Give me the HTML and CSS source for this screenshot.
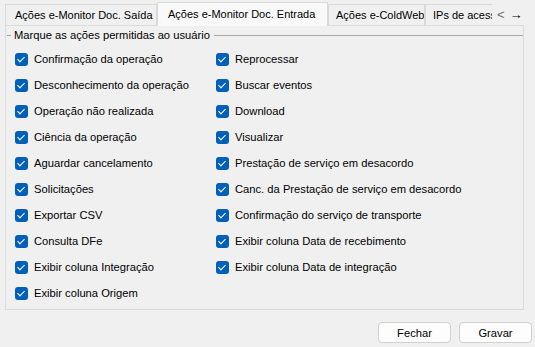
FILE: index.html
```html
<!DOCTYPE html>
<html lang="pt-BR">
  <head>
    <meta charset="UTF-8" />
    <title>Ações permitidas</title>
    <link rel="stylesheet" href="styles.css">
  </head>
  <body>
    <div class="tabs">
      <div class="tab tab-saida">Ações e-Monitor Doc. Saída</div>
      <div class="tab tab-entrada active">Ações e-Monitor Doc. Entrada</div>
      <div class="tab tab-coldweb">Ações e-ColdWeb</div>
      <div class="tab tab-ips">IPs de acesso</div>
      <div class="tab-scroll">
        <span class="arrow-left">&lt;</span>
        <span class="arrow-right">&rarr;</span>
      </div>
    </div>
    <div class="panel">
      <div class="group-title">
        <span class="dash"></span>
        <span class="title-text">Marque as ações permitidas ao usuário</span>
        <span class="line"></span>
      </div>
      <div class="options">
        <div class="column">
          <label class="check"><span class="box"></span>Confirmação da operação</label>
          <label class="check"><span class="box"></span>Desconhecimento da operação</label>
          <label class="check"><span class="box"></span>Operação não realizada</label>
          <label class="check"><span class="box"></span>Ciência da operação</label>
          <label class="check"><span class="box"></span>Aguardar cancelamento</label>
          <label class="check"><span class="box"></span>Solicitações</label>
          <label class="check"><span class="box"></span>Exportar CSV</label>
          <label class="check"><span class="box"></span>Consulta DFe</label>
          <label class="check"><span class="box"></span>Exibir coluna Integração</label>
          <label class="check"><span class="box"></span>Exibir coluna Origem</label>
        </div>
        <div class="column">
          <label class="check"><span class="box"></span>Reprocessar</label>
          <label class="check"><span class="box"></span>Buscar eventos</label>
          <label class="check"><span class="box"></span>Download</label>
          <label class="check"><span class="box"></span>Visualizar</label>
          <label class="check"><span class="box"></span>Prestação de serviço em desacordo</label>
          <label class="check"><span class="box"></span>Canc. da Prestação de serviço em desacordo</label>
          <label class="check"><span class="box"></span>Confirmação do serviço de transporte</label>
          <label class="check"><span class="box"></span>Exibir coluna Data de recebimento</label>
          <label class="check"><span class="box"></span>Exibir coluna Data de integração</label>
        </div>
      </div>
    </div>
    <div class="actions">
      <button type="button">Fechar</button>
      <button type="button">Gravar</button>
    </div>
  </body>
</html>
```

FILE: styles.css
```css
body {
  margin: 0;
  width: 535px;
  height: 347px;
  background: #f0f0f0;
  font-family: "Liberation Sans", Arial, sans-serif;
  font-size: 11.2px;
  color: #000;
  overflow: hidden;
}

/* tab strip */
.tabs {
  display: flex;
  align-items: flex-end;
  height: 25px;
  padding-left: 5px;
  position: relative;
  z-index: 1;
  font-size: 11px;
}

.tab {
  box-sizing: border-box;
  height: 21px;
  line-height: 20px;
  padding-left: 9px;
  border: 1px solid #d9d9d9;
  border-bottom: 0;
  background: #f0f0f0;
  white-space: nowrap;
  overflow: hidden;
}

.tab-saida { width: 152px; }
.tab-entrada { width: 171px; }
.tab-coldweb { width: 97px; padding-left: 7px; }
.tab-ips { width: 67px; padding-left: 7px; border-right: 0; }

.tab.active {
  height: 24px;
  margin-bottom: -1px;
  line-height: 22px;
  padding-left: 10px;
  background: #f9f9f9;
  border-color: #d9d9d9;
}

.tab-scroll {
  display: flex;
  align-items: center;
  gap: 5px;
  height: 21px;
  padding-left: 5px;
  font-size: 13px;
}

.arrow-left {
  color: #6d6d6d;
}

.arrow-right {
  color: #000;
}

/* page */
.panel {
  box-sizing: border-box;
  width: 519px;
  height: 285px;
  margin-left: 5px;
  border: 1px solid #dcdcdc;
  padding-top: 1px;
}

.group-title {
  display: flex;
  align-items: center;
  height: 16px;
}

.dash {
  width: 4px;
  height: 1px;
  margin: 0 3px 0 1px;
  background: #a0a0a0;
}

.title-text {
  padding-right: 4px;
}

.line {
  flex: 1;
  height: 1px;
  background: #a9a9a9;
}

.options {
  display: grid;
  grid-template-columns: 201px 1fr;
  padding: 3px 0 0 9px;
}

.column {
  display: flex;
  flex-direction: column;
}

.check {
  display: flex;
  align-items: center;
  gap: 6px;
  height: 26px;
  white-space: nowrap;
}

.box {
  box-sizing: border-box;
  width: 13px;
  height: 13px;
  border-radius: 3px;
  background: #005fb8;
  position: relative;
}

.box::after {
  content: "";
  position: absolute;
  left: 4px;
  top: 2px;
  width: 3px;
  height: 6px;
  border: solid #fff;
  border-width: 0 1px 1px 0;
  transform: rotate(45deg);
}

/* buttons */
.actions {
  display: flex;
  justify-content: flex-end;
  gap: 8px;
  margin-top: 12px;
  padding-right: 3px;
}

.actions button {
  width: 73px;
  height: 21px;
  padding: 0;
  font-family: inherit;
  font-size: 11.2px;
  color: #000;
  background: #fdfdfd;
  border: 1px solid #d0d0d0;
  border-radius: 4px;
}
```
